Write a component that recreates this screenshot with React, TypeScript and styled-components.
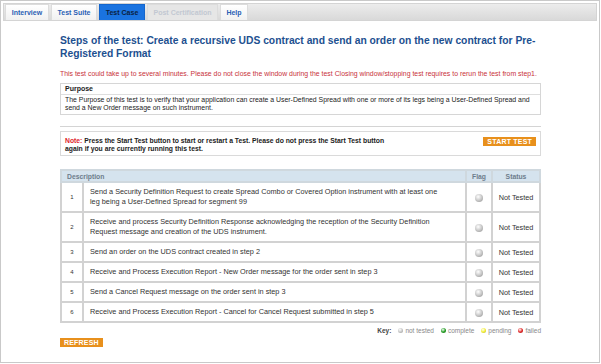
import React from 'react';
import styled, { createGlobalStyle } from 'styled-components';

type Step = {
  id: number;
  text: string;
};

const steps: Step[] = [
  {
    id: 1,
    text: 'Send a Security Definition Request to create Spread Combo or Covered Option instrument with at least one leg being a User-Defined Spread for segment 99',
  },
  {
    id: 2,
    text: 'Receive and process Security Definition Response acknowledging the reception of the Security Definition Request message and creation of the UDS instrument.',
  },
  { id: 3, text: 'Send an order on the UDS contract created in step 2' },
  {
    id: 4,
    text: 'Receive and Process Execution Report - New Order message for the order sent in step 3',
  },
  { id: 5, text: 'Send a Cancel Request message on the order sent in step 3' },
  {
    id: 6,
    text: 'Receive and Process Execution Report - Cancel for Cancel Request submitted in step 5',
  },
];

const tabs = [
  { label: 'Interview', state: 'normal', width: 44 },
  { label: 'Test Suite', state: 'normal', width: 46 },
  { label: 'Test Case', state: 'active', width: 46 },
  { label: 'Post Certification', state: 'disabled', width: 71 },
  { label: 'Help', state: 'normal', width: 28 },
] as const;

const keys = [
  { label: 'not tested', color: '#c4c4c4' },
  { label: 'complete', color: '#1a9a1a' },
  { label: 'pending', color: '#f2ee2a' },
  { label: 'failed', color: '#e02020' },
];

const App: React.FC = () => {
  return (
    <>
      <GlobalStyle />
      <Frame>
        <TabBar>
          {tabs.map((t) => (
            <Tab key={t.label} $state={t.state} $width={t.width}>
              {t.label}
            </Tab>
          ))}
        </TabBar>
        <Content>
          <Title>
            Steps of the test: Create a recursive UDS contract and send an order
            on the new contract for Pre-Registered Format
          </Title>
          <Warning>
            This test could take up to several minutes. Please do not close the
            window during the test Closing window/stopping test requires to
            rerun the test from step1.
          </Warning>
          <PurposeBox>
            <PurposeHead>Purpose</PurposeHead>
            <PurposeBody>
              The Purpose of this test is to verify that your application can
              create a User-Defined Spread with one or more of its legs being a
              User-Defined Spread and send a New Order message on such
              instrument.
            </PurposeBody>
          </PurposeBox>
          <Rule />
          <NoteBox>
            <NoteText>
              <NoteLabel>Note: </NoteLabel>Press the Start Test button to start
              or restart a Test. Please do not press the Start Test button
              again if you are currently running this test.
            </NoteText>
            <OrangeButton>START TEST</OrangeButton>
          </NoteBox>
          <StepsTable>
            <thead>
              <tr>
                <HeadCell colSpan={2} $align="left">
                  Description
                </HeadCell>
                <HeadCell>Flag</HeadCell>
                <HeadCell>Status</HeadCell>
              </tr>
            </thead>
            <tbody>
              {steps.map((s) => (
                <tr key={s.id}>
                  <NumCell>{s.id}</NumCell>
                  <DescCell>{s.text}</DescCell>
                  <FlagCell>
                    <Ball $color="#c4c4c4" $size={8} />
                  </FlagCell>
                  <StatusCell>Not Tested</StatusCell>
                </tr>
              ))}
            </tbody>
          </StepsTable>
          <KeyRow>
            <KeyLabel>Key:</KeyLabel>
            {keys.map((k) => (
              <KeyItem key={k.label}>
                <Ball $color={k.color} $size={5} />
                {k.label}
              </KeyItem>
            ))}
          </KeyRow>
          <RefreshRow>
            <OrangeButton>REFRESH</OrangeButton>
          </RefreshRow>
        </Content>
      </Frame>
    </>
  );
};

export default App;

const GlobalStyle = createGlobalStyle`
  html, body {
    margin: 0;
    padding: 0;
    background: #ffffff;
  }
  body {
    font-family: 'Liberation Sans', Arial, sans-serif;
  }
`;

const Frame = styled.div`
  width: 600px;
  height: 363px;
  box-sizing: border-box;
  border: 1px solid #c9c9c9;
  padding: 2px;
  background: #fff;
`;

const TabBar = styled.div`
  display: flex;
  align-items: flex-end;
  gap: 2px;
  height: 18px;
  box-sizing: border-box;
  padding: 2px 0 0 1px;
  background: linear-gradient(#ececec, #d9d9d9);
  border: 1px solid #d4d4d4;
`;

const Tab = styled.div<{
  $state: 'normal' | 'active' | 'disabled';
  $width: number;
}>`
  width: ${(p) => p.$width}px;
  height: 16px;
  box-sizing: border-box;
  display: flex;
  align-items: center;
  justify-content: center;
  white-space: nowrap;
  font-size: 7px;
  font-weight: bold;
  border: 1px solid
    ${(p) => (p.$state === 'active' ? '#1566cc' : '#dcdcdc')};
  border-bottom: none;
  background: ${(p) =>
    p.$state === 'active'
      ? '#1a73e0'
      : p.$state === 'disabled'
      ? '#e6e6e6'
      : 'linear-gradient(#ffffff, #f1f1f1)'};
  color: ${(p) =>
    p.$state === 'active'
      ? '#0b1f3f'
      : p.$state === 'disabled'
      ? '#c2c8d2'
      : '#2b5fb4'};
`;

const Content = styled.div`
  width: 481px;
  margin-left: 57px;
  padding-top: 13px;
`;

const Title = styled.h1`
  margin: 0;
  font-size: 10.3px;
  line-height: 13px;
  font-weight: bold;
  color: #1d5090;
`;

const Warning = styled.p`
  margin: 9px 0 5px;
  font-size: 6.9px;
  line-height: 9px;
  color: #c8323a;
  white-space: nowrap;
`;

const PurposeBox = styled.div`
  border: 1px solid #d6d6d6;
`;

const PurposeHead = styled.div`
  padding: 1px 4px;
  font-size: 7px;
  line-height: 8px;
  font-weight: bold;
  color: #222;
  border-bottom: 1px solid #dedede;
`;

const PurposeBody = styled.div`
  padding: 1px 4px 2px;
  font-size: 6.9px;
  line-height: 8px;
  color: #222;
`;

const Rule = styled.div`
  margin: 11px 0 4px;
  height: 1px;
  background: #d4d4d4;
`;

const NoteBox = styled.div`
  display: flex;
  align-items: flex-start;
  justify-content: space-between;
  padding: 5px 4px 2px 4px;
  border: 1px solid #dadada;
  margin-bottom: 13px;
`;

const NoteText = styled.p`
  margin: 0;
  width: 330px;
  font-size: 6.8px;
  line-height: 8px;
  font-weight: bold;
  color: #222;
`;

const NoteLabel = styled.span`
  color: #e0242c;
`;

const OrangeButton = styled.button`
  display: block;
  padding: 0 4px;
  height: 9px;
  border: none;
  background: #e8901c;
  color: #fff;
  font-family: 'Liberation Sans', Arial, sans-serif;
  font-size: 7px;
  line-height: 9px;
  font-weight: bold;
  letter-spacing: 0.2px;
`;

const RefreshRow = styled.div`
  margin-top: 4px;
`;

const StepsTable = styled.table`
  width: 481px;
  border-collapse: collapse;
  border: 2px solid #d2d2d2;
  font-size: 7.3px;
  color: #333;
`;

const HeadCell = styled.th<{ $align?: 'left' | 'center' }>`
  height: 10px;
  padding: 0 5px;
  text-align: ${(p) => p.$align ?? 'center'};
  font-size: 6.8px;
  font-weight: bold;
  color: #6e7d8c;
  background: #d5e3ee;
  border: 2px solid #cfd8de;
`;

const NumCell = styled.td`
  width: 18px;
  text-align: center;
  font-size: 6px;
  border: 2px solid #d2d2d2;
`;

const DescCell = styled.td`
  padding: 4px 18px 4px 6px;
  line-height: 10px;
  border: 2px solid #d2d2d2;
`;

const FlagCell = styled.td`
  width: 22px;
  text-align: center;
  border: 2px solid #d2d2d2;
`;

const StatusCell = styled.td`
  width: 44px;
  text-align: center;
  border: 2px solid #d2d2d2;
`;

const Ball = styled.span<{ $color: string; $size: number }>`
  display: inline-block;
  width: ${(p) => p.$size}px;
  height: ${(p) => p.$size}px;
  border-radius: 50%;
  vertical-align: middle;
  background: radial-gradient(
    circle at 40% 35%,
    #ffffff 0%,
    ${(p) => p.$color} 55%,
    #666 130%
  );
`;

const KeyRow = styled.div`
  display: flex;
  justify-content: flex-end;
  align-items: center;
  gap: 7px;
  margin-top: 4px;
  font-size: 6.5px;
  color: #888;
`;

const KeyLabel = styled.span`
  font-weight: bold;
  color: #444;
`;

const KeyItem = styled.span`
  display: inline-flex;
  align-items: center;
  gap: 2px;
`;
